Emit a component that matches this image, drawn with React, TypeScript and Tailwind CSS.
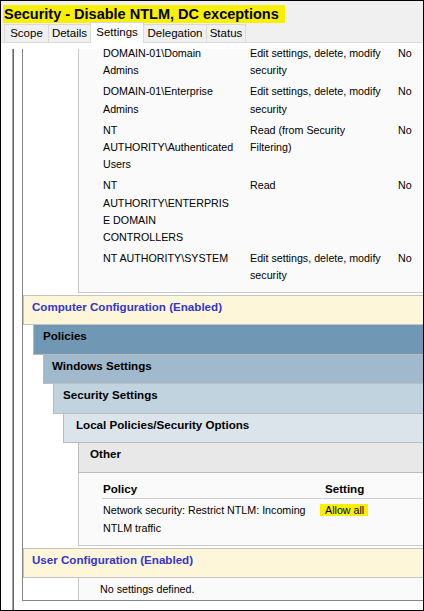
type Row = { name: string[]; perm: string[]; inherited: string };

const DELEGATION: Row[] = [
  { name: ["DOMAIN-01\\Domain", "Admins"], perm: ["Edit settings, delete, modify", "security"], inherited: "No" },
  { name: ["DOMAIN-01\\Enterprise", "Admins"], perm: ["Edit settings, delete, modify", "security"], inherited: "No" },
  { name: ["NT", "AUTHORITY\\Authenticated", "Users"], perm: ["Read (from Security", "Filtering)"], inherited: "No" },
  { name: ["NT", "AUTHORITY\\ENTERPRIS", "E DOMAIN", "CONTROLLERS"], perm: ["Read"], inherited: "No" },
  { name: ["NT AUTHORITY\\SYSTEM"], perm: ["Edit settings, delete, modify", "security"], inherited: "No" },
];

const TABS = [
  { label: "Scope", cls: "w-[44px] border-l" },
  { label: "Details", cls: "w-[42px] border-l" },
  { label: "Settings", cls: "w-[54px] border-x", active: true },
  { label: "Delegation", cls: "w-[62px]" },
  { label: "Status", cls: "w-[40px] border-x" },
];

function Lines({ lines }: { lines: string[] }) {
  return (
    <>
      {lines.map((l, i) => (
        <div key={i} className="whitespace-nowrap">
          {l}
        </div>
      ))}
    </>
  );
}

function ConfigBar({ title }: { title: string }) {
  return (
    <div className="h-[30px] border-y border-l border-[#c4c4c4] bg-[#fdf6d8] pl-[8px] pt-[4px] text-[11.6px] font-bold leading-[14px] text-[#3434d2]">
      {title}
    </div>
  );
}

function Bar({ title, className }: { title: string; className: string }) {
  return (
    <div
      className={`border-b border-l border-[#bcbcbc] pt-[4px] text-[11.6px] font-bold leading-[14px] text-black ${className}`}
    >
      {title}
    </div>
  );
}

export default function App() {
  return (
    <div className="flex h-[611px] w-[424px] flex-col overflow-hidden border border-black bg-[#f0f0f0] font-['Liberation_Sans',Arial,sans-serif] text-black">
      {/* title */}
      <div className="h-[21px] shrink-0 pl-[2px] pt-[1px]">
        <div className="inline-block h-[18px] w-[282px] bg-[#f9ef00] pl-[1px] text-[14.5px] font-bold leading-[18px]">
          Security - Disable NTLM, DC exceptions
        </div>
      </div>

      {/* tabs */}
      <div className="flex h-[20px] shrink-0 items-end pl-[3px] text-[11.5px]">
        {TABS.map((t) =>
          t.active ? (
            <div
              key={t.label}
              className={`relative -mb-px h-[21px] border-t border-[#d9d9d9] bg-white text-center leading-[18px] ${t.cls}`}
            >
              {t.label}
            </div>
          ) : (
            <div
              key={t.label}
              className={`h-[18px] border-t border-[#d9d9d9] bg-[#f0f0f0] text-center leading-[17px] ${t.cls}`}
            >
              {t.label}
            </div>
          )
        )}
      </div>

      {/* panel */}
      <div className="flex min-h-0 flex-1 border-t border-[#d9d9d9] bg-white pl-[11px] pt-[6px]">
        <div className="flex-1 border-l border-[#a0a0a0]">
          <div className="h-full overflow-hidden border-l border-[#696969] pl-[8px]">
            <div className="-mt-[6px] border-b border-l border-[#858585]">
              {/* delegation table (scrolled) */}
              <div className="ml-[55px] border-b border-l border-[#c8c8c8] bg-[#fafafa] pb-[5px] pl-[24px] text-[10.7px] leading-[17.2px]">
                {DELEGATION.map((r, i) => (
                  <div key={i} className="flex py-[2px]">
                    <div className="w-[147px]">
                      <Lines lines={r.name} />
                    </div>
                    <div className="w-[148px]">
                      <Lines lines={r.perm} />
                    </div>
                    <div>{r.inherited}</div>
                  </div>
                ))}
              </div>

              {/* computer configuration */}
              <div className="mt-[2px]">
                <ConfigBar title="Computer Configuration (Enabled)" />
                <div className="ml-[10px]">
                  <Bar title="Policies" className="h-[30px] bg-[#7097b3] pl-[9px]" />
                  <div className="ml-[10px]">
                    <Bar title="Windows Settings" className="h-[29px] bg-[#a1b9cc] pl-[8px]" />
                    <div className="ml-[10px]">
                      <Bar title="Security Settings" className="h-[30px] bg-[#c1d3df] pl-[9px]" />
                      <div className="ml-[10px]">
                        <Bar title="Local Policies/Security Options" className="h-[29px] bg-[#dbe4eb] pl-[12px]" />
                        <div className="ml-[15px]">
                          <Bar title="Other" className="h-[30px] bg-[#e8e8e8] pl-[11px]" />
                          <div className="border-b border-l border-[#c8c8c8] bg-[#fafafa] pb-[8px] pl-[23px] pt-[7px] text-[10.7px]">
                            <div className="flex text-[11.6px] font-bold leading-[18px]">
                              <div className="w-[220px] border-b border-[#cfcfcf] pl-[1px]">Policy</div>
                              <div className="w-[1px]" />
                              <div className="flex-1 border-b border-[#cfcfcf] pl-[2px]">Setting</div>
                            </div>
                            <div className="flex pt-[3.5px] leading-[17.5px]">
                              <div className="w-[221px] pl-[1px]">
                                <Lines lines={["Network security: Restrict NTLM: Incoming", "NTLM traffic"]} />
                              </div>
                              <div className="flex-1 pl-[2px]">
                                <span className="-ml-[5px] inline-block bg-[#f9ef00] pl-[5px] pr-[4px] leading-[12px]">
                                  Allow all
                                </span>
                              </div>
                            </div>
                          </div>
                        </div>
                      </div>
                    </div>
                  </div>
                </div>
              </div>

              {/* user configuration */}
              <div className="mt-[2px]">
                <ConfigBar title="User Configuration (Enabled)" />
                <div className="ml-[55px] h-[22px] border-l border-[#c8c8c8] bg-[#fafafa] pl-[21px] pt-[3px] text-[10.7px] leading-[17.5px]">
                  No settings defined.
                </div>
              </div>
            </div>
          </div>
        </div>
      </div>
    </div>
  );
}
